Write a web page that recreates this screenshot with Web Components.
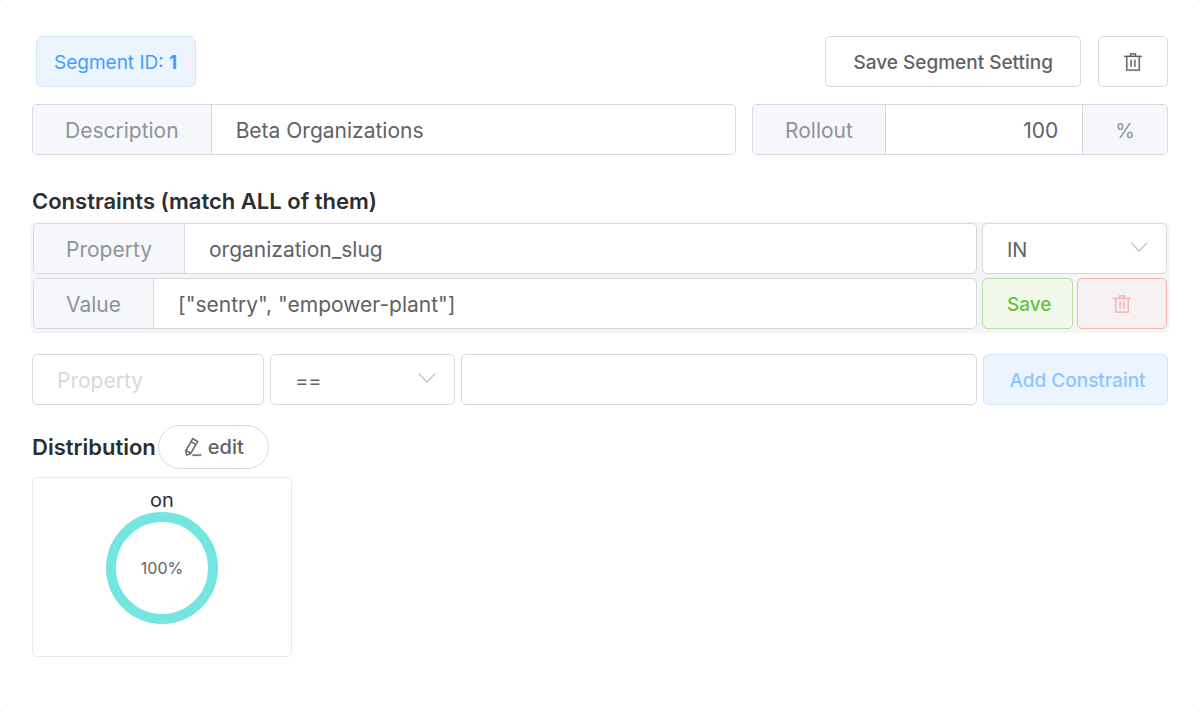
<!DOCTYPE html>
<html lang="en">
<head>
<meta charset="utf-8">
<title>Segment</title>
<style>
  body {
    margin: 0;
    background: #f2f2f2;
    color: #303133;
    font-family: Inter, "Liberation Sans", sans-serif;
    font-size: 20px;
    line-height: 24px;
  }
</style>
</head>
<body>
<segment-editor></segment-editor>

<script>
const define = (name, html, setup) => {
  const template = document.createElement('template');
  template.innerHTML = html;
  customElements.define(name, class extends HTMLElement {
    constructor() {
      super();
      this.attachShadow({ mode: 'open' }).append(template.content.cloneNode(true));
    }
    connectedCallback() {
      if (setup) setup(this, this.shadowRoot);
    }
  });
};

const reset = `
  *, *::before, *::after { box-sizing: border-box; }
  input, select, button { font: inherit; color: inherit; margin: 0; outline: none; }
`;

const icons = {
  trash: 'M160 256H96a32 32 0 0 1 0-64h256V95.936a32 32 0 0 1 32-32h256a32 32 0 0 1 32 32V192h256a32 32 0 1 1 0 64h-64v672a32 32 0 0 1-32 32H192a32 32 0 0 1-32-32V256zm448-64v-64H416v64h192zM224 896h576V256H224v640zm192-128a32 32 0 0 1-32-32V416a32 32 0 0 1 64 0v320a32 32 0 0 1-32 32zm192 0a32 32 0 0 1-32-32V416a32 32 0 0 1 64 0v320a32 32 0 0 1-32 32z',
  edit: 'M199.04 672.64l193.984 112 224-387.968-193.92-112-224 388.032zm-23.872 60.16l32.896 148.288 144.896-45.696L175.168 732.8zM455.04 229.248l193.92 112 56.704-98.112-193.984-112-56.64 98.112zM104.32 708.8l384-665.024 304.768 175.936L409.152 884.8h.064l-248.448 78.336L104.32 708.8zm384 254.272v-64h448v64h-448z'
};

define('ui-icon', `
  <style>
    :host { display: inline-flex; width: 20px; height: 20px; }
    svg { width: 100%; height: 100%; fill: currentColor; stroke: currentColor; stroke-width: 14; }
  </style>
  <svg viewBox="0 0 1024 1024" aria-hidden="true"><path/></svg>
`, (host, root) => root.querySelector('path').setAttribute('d', icons[host.getAttribute('name')]));

define('ui-tag', `
  <style>
    ${reset}
    :host {
      display: flex; align-items: center; box-sizing: border-box; height: 51px;
      padding: 2px 18px 0 17px; border: 1px solid #d3e8ff; border-radius: 6px;
      background: #ebf4ff; color: #409eff; font-size: 19px;
    }
    span { white-space: pre; }
  </style>
  <span><slot></slot></span>
`);

define('ui-button', `
  <style>
    ${reset}
    :host { display: flex; min-width: 0; }
    button {
      flex: 1; display: flex; align-items: center; justify-content: center; gap: 5px;
      height: 51px; padding: 2px 24px 0; border: 1px solid #d6d9e2; border-radius: 5px;
      background: #fff; color: #606266; font-size: 19px; font-weight: 500; white-space: nowrap;
    }
    :host([kind=main]) button { padding: 2px 27px 0; }
    :host([kind=success]) button, :host([kind=primary]) button { padding: 2px 20px 0 24px; }
    :host([kind=success]) button { background: #f0f9eb; border-color: #b3e19d; color: #67c23a; }
    :host([kind=danger]) button { background: #f6f2f4; border-color: #f9b1b1; color: #f9b1b1; }
    :host([kind=primary]) button { background: #ebf4ff; border-color: #d3e8ff; color: #8cc5ff; }
    :host([icon]) button { padding: 0 24px; }
    :host([round]) button { height: 44px; padding: 0 24px; border-radius: 22px; font-size: 20px; }
  </style>
  <button type="button"><slot></slot></button>
`, (host, root) => {
  const button = root.querySelector('button');
  if (host.hasAttribute('label')) button.setAttribute('aria-label', host.getAttribute('label'));
  button.disabled = host.hasAttribute('disabled');
});

define('ui-field', `
  <style>
    ${reset}
    :host {
      display: flex; box-sizing: border-box; height: 51px; min-width: 0; overflow: hidden;
      border: 1px solid #d6d9e2; border-radius: 5px; background: #fff; color: #606266;
      font-size: 21px;
    }
    label, .suffix {
      display: flex; align-items: center; padding: 2px 32px 0;
      background: #f5f7fa; color: #909399; white-space: nowrap;
    }
    label { border-right: 1px solid #d6d9e2; }
    .suffix { border-left: 1px solid #d6d9e2; }
    .suffix { font-size: 20px; }
    [hidden] { display: none; }
    input { flex: 1; min-width: 0; width: 0; padding: 2px 24px 0; border: 0; background: none; }
    input::placeholder { color: #d6d9e2; opacity: 1; }
    :host([numeric]) input { text-align: right; }
  </style>
  <label for="box"></label><input id="box" type="text"><span class="suffix"></span>
`, (host, root) => {
  const get = name => host.getAttribute(name) || '';
  const label = root.querySelector('label');
  const input = root.querySelector('input');
  const suffix = root.querySelector('.suffix');
  label.textContent = get('label');
  label.hidden = !get('label');
  suffix.textContent = get('suffix');
  suffix.hidden = !get('suffix');
  input.placeholder = get('placeholder');
  input.value = get('value');
  if (label.hidden) input.setAttribute('aria-label', get('name'));
});

define('ui-select', `
  <style>
    ${reset}
    :host {
      display: grid; box-sizing: border-box; height: 51px; border: 1px solid #d6d9e2;
      border-radius: 5px; background: #fff; color: #606266; align-items: center;
    }
    select, svg { grid-area: 1 / 1; }
    select { appearance: none; width: 100%; height: 100%; padding: 2px 24px 0; border: 0; background: none; }
    svg { justify-self: end; margin: 0 18px 4px 0; width: 18px; height: 10px; pointer-events: none; }
  </style>
  <select></select>
  <svg viewBox="0 0 18 10" fill="none" stroke="#c0c4cc" stroke-width="1.3" aria-hidden="true"><path d="M1 .8 9 9 17 .8"/></svg>
`, (host, root) => {
  const select = root.querySelector('select');
  select.setAttribute('aria-label', host.getAttribute('name'));
  select.replaceChildren(...['==', '!=', 'IN', 'NOT IN'].map(op => new Option(op, op)));
  select.value = host.getAttribute('value');
});

define('distribution-card', `
  <style>
    ${reset}
    :host {
      display: flex; flex-direction: column; align-items: center; box-sizing: border-box;
      width: 260px; height: 180px; padding-top: 10px;
      border: 1px solid #e6eaf2; border-radius: 5px;
    }
    .ring {
      display: grid; place-items: center; width: 112px; height: 112px;
      border: 10px solid #74e5e0; border-radius: 50%; color: #606266; font-size: 16px;
    }
  </style>
  <slot></slot>
  <div class="ring"><slot name="percent"></slot></div>
`);

define('segment-editor', `
  <style>
    ${reset}
    :host {
      display: block; box-sizing: border-box; min-height: 100vh; padding: 36px 32px;
      background: #fff; border-radius: 4px;
    }
    header { display: flex; gap: 17px; margin-bottom: 17px; }
    ui-tag { margin: 0 auto 0 4px; }
    h2 { margin: 0; font-size: 22px; line-height: 28px; font-weight: 600; color: #2c2e31; }
    .basics { display: grid; grid-template-columns: 22fr 13fr; gap: 16px; margin-bottom: 32px; }
    .constraint {
      display: grid; grid-template-columns: 1fr 90px 90px; gap: 4px 5px;
      margin: 7px -2px 21px; padding: 1px 3px 4px; border-radius: 6px; background: #f5f5f6;
    }
    .constraint ui-select { grid-column: span 2; }
    .new { display: grid; grid-template-columns: 9fr 185px 20fr 185px; gap: 6px; margin-bottom: 20px; }
    .title { display: flex; align-items: center; gap: 2px; margin-bottom: 8px; }
  </style>
  <header>
    <ui-tag>Segment ID: <b>1</b></ui-tag>
    <ui-button kind="main">Save Segment Setting</ui-button>
    <ui-button icon label="Delete segment"><ui-icon name="trash"></ui-icon></ui-button>
  </header>
  <section class="basics">
    <ui-field label="Description" value="Beta Organizations"></ui-field>
    <ui-field label="Rollout" value="100" suffix="%" numeric></ui-field>
  </section>
  <h2>Constraints (match ALL of them)</h2>
  <section class="constraint">
    <ui-field label="Property" value="organization_slug"></ui-field>
    <ui-select name="Operator" value="IN"></ui-select>
    <ui-field label="Value" value='["sentry", "empower-plant"]'></ui-field>
    <ui-button kind="success">Save</ui-button>
    <ui-button kind="danger" icon label="Delete constraint"><ui-icon name="trash"></ui-icon></ui-button>
  </section>
  <section class="new">
    <ui-field name="Property" placeholder="Property"></ui-field>
    <ui-select name="Operator" value="=="></ui-select>
    <ui-field name="Value"></ui-field>
    <ui-button kind="primary" disabled>Add Constraint</ui-button>
  </section>
  <div class="title">
    <h2>Distribution</h2>
    <ui-button round><ui-icon name="edit"></ui-icon>edit</ui-button>
  </div>
  <distribution-card>on<span slot="percent">100%</span></distribution-card>
`);
</script>
</body>
</html>
